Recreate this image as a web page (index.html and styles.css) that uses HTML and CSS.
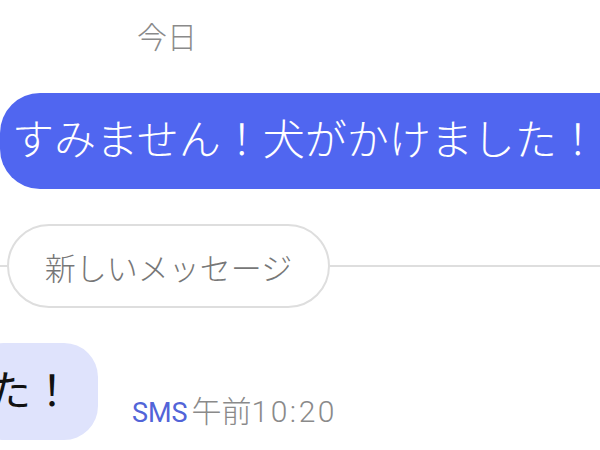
FILE: index.html
```html
<!DOCTYPE html>
<html lang="ja">
<head>
<meta charset="utf-8">
<link rel="stylesheet" href="styles.css">
</head>
<body>
<div class="chat">
  <div class="date">今日</div>
  <div class="sent">すみません！犬がかけました！</div>
  <div class="divider">
    <span class="line short"></span>
    <span class="pill">新しいメッセージ</span>
    <span class="line long"></span>
  </div>
  <div class="received-row">
    <div class="received">た！</div>
    <div class="meta"><span class="sms">SMS</span> <span class="time">午前<span class="digits">10:20</span></span></div>
  </div>
</div>
</body>
</html>
```
FILE: styles.css
```css
html, body {
  margin: 0;
  padding: 0;
  background: #ffffff;
  overflow: hidden;
}
.chat {
  width: 600px;
  height: 450px;
  overflow: hidden;
  display: flex;
  flex-direction: column;
  font-family: Roboto, "Noto Sans CJK JP", sans-serif;
  font-weight: 300;
}
.date {
  padding-top: 18px;
  padding-left: 137px;
  font-size: 30px;
  line-height: 40px;
  color: #8a8a8a;
}
.sent {
  margin-top: 35px;
  margin-right: -60px;
  height: 96px;
  line-height: 96px;
  padding-left: 12px;
  font-size: 42px;
  color: #ffffff;
  background: #5066f0;
  border-radius: 40px;
  white-space: nowrap;
}
.divider {
  margin-top: 35px;
  display: flex;
  align-items: center;
  height: 84px;
}
.line {
  height: 2px;
  background: #dedede;
}
.line.short { width: 7px; }
.line.long { flex: 1; }
.pill {
  box-sizing: border-box;
  width: 323px;
  height: 84px;
  border: 2px solid #dedede;
  border-radius: 42px;
  display: flex;
  align-items: center;
  justify-content: center;
  font-size: 31px;
  color: #777777;
  white-space: nowrap;
}
.received-row {
  margin-top: 35px;
  display: flex;
  align-items: flex-end;
}
.received {
  margin-left: -30px;
  height: 97px;
  line-height: 97px;
  padding: 0 25px 0 19px;
  font-size: 42px;
  font-weight: 400;
  color: #111111;
  background: #dfe3fc;
  border-radius: 34px;
  white-space: nowrap;
}
.meta {
  margin-left: 34px;
  margin-bottom: 8px;
  line-height: 30px;
  white-space: nowrap;
}
.sms {
  font-size: 27px;
  font-weight: 400;
  color: #5264d8;
}
.time {
  font-size: 30px;
  color: #8a8a8a;
}
.digits {
  letter-spacing: 2.5px;
}
```
